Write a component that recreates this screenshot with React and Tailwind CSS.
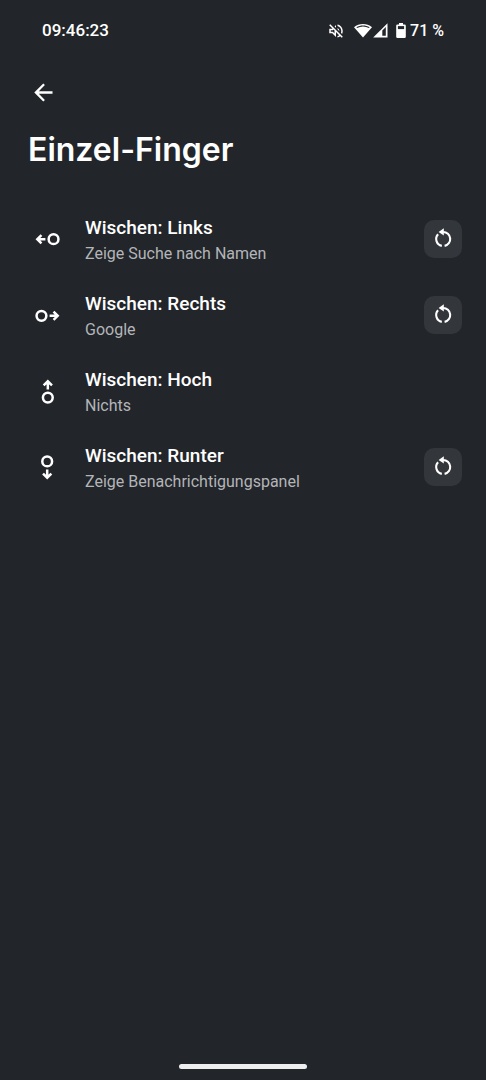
import React from 'react';

function Svg({ className, children, viewBox = '0 0 24 24' }) {
  return (
    <svg viewBox={viewBox} className={className} fill="currentColor" aria-hidden="true">
      {children}
    </svg>
  );
}

const rotations = {
  left: 'rotate(0 12 12)',
  right: 'rotate(180 12 12)',
  up: 'rotate(90 12 12)',
  down: 'rotate(270 12 12)',
};

function SwipeIcon({ direction }) {
  return (
    <Svg className="size-[25px] shrink-0">
      <g transform={rotations[direction]} fill="none" stroke="currentColor" strokeWidth="2.4">
        <circle cx="17.8" cy="11.7" r="4.7" />
        <path d="M10 11.7H3M6.2 7.7 2.2 11.7l4 4" />
      </g>
    </Svg>
  );
}

function StatusBar() {
  return (
    <div className="flex h-[62px] items-center justify-between px-[42px] text-[17px] font-medium">
      <time>09:46:23</time>
      <div className="flex items-center">
        <Svg className="mr-[9px] size-[18px]" viewBox="0 0 24 24">
          <path d="M4.34 2.93 2.93 4.34 7.29 8.7 7 9H3v6h4l5 5v-6.59l4.18 4.18c-.65.49-1.38.88-2.18 1.11v2.06a8.94 8.94 0 0 0 3.61-1.75l2.05 2.05 1.41-1.41L4.34 2.93zM10 15.17 7.83 13H5v-2h2.83l.88-.88L10 11.41v3.76zM19 12c0 .82-.15 1.61-.41 2.34l1.53 1.53c.56-1.17.88-2.48.88-3.87 0-4.28-2.99-7.86-7-8.77v2.06c2.89.86 5 3.54 5 6.71zm-7-8-1.88 1.88L12 7.76zm4.5 8A4.5 4.5 0 0 0 14 7.97v1.79l2.48 2.48c.01-.08.02-.16.02-.24z" />
        </Svg>
        <Svg className="h-4 w-[18px]" viewBox="0 0 18 16">
          <path d="M0 4.2C5 0 13 0 18 4.2L9 14.6z" />
          <path d="M2.4 4.3C6.4 1.9 11.6 1.9 15.6 4.3L15 5.1C11 3 7 3 3 5.1z" className="fill-[#22252a]" />
        </Svg>
        <Svg className="mr-2 size-4" viewBox="0 0 16 16">
          <path d="M15.5.2V14.4H1.2z" />
          <path d="M10.3 7.4 13.8 3.9V12.7H10.3z" className="fill-[#22252a]" />
        </Svg>
        <Svg className="mr-1 h-4 w-[10px]" viewBox="0 0 10 16">
          <path d="M3 0h4v1.5h1.5A1.3 1.3 0 0 1 9.8 2.8v11a1.3 1.3 0 0 1-1.3 1.3h-7A1.3 1.3 0 0 1 .2 13.8v-11a1.3 1.3 0 0 1 1.3-1.3H3z" />
          <path d="M1.9 3.1h6.2v3H1.9z" className="fill-[#22252a]" />
        </Svg>
        <span className="text-base">71&nbsp;%</span>
      </div>
    </div>
  );
}

const gestures = [
  { direction: 'left', title: 'Wischen: Links', action: 'Zeige Suche nach Namen', resettable: true },
  { direction: 'right', title: 'Wischen: Rechts', action: 'Google', resettable: true },
  { direction: 'up', title: 'Wischen: Hoch', action: 'Nichts', resettable: false },
  { direction: 'down', title: 'Wischen: Runter', action: 'Zeige Benachrichtigungspanel', resettable: true },
];

function GestureRow({ direction, title, action, resettable }) {
  return (
    <li className="flex h-[76px] items-center pr-6 pl-[35px]">
      <button type="button" className="flex min-w-0 flex-1 items-center gap-[25px] text-left">
        <SwipeIcon direction={direction} />
        <span className="flex min-w-0 flex-col pt-1">
          <span className="text-[19px] leading-[26px] font-medium">{title}</span>
          <span className="text-base leading-[26px] text-[#b3b5b8]">{action}</span>
        </span>
      </button>
      {resettable && (
        <button
          type="button"
          aria-label={`${title} zurücksetzen`}
          className="flex size-[38px] shrink-0 items-center justify-center rounded-[10px] bg-[#33363b]"
        >
          <Svg className="size-6">
            <path d="M12.8 1.2 7.6 4.9l5.2 3.7z" />
            <path
              d="M12.2 5a7 7 0 0 1 1.4 13.86M7.1 7.2A7 7 0 0 0 10.8 18.86"
              fill="none"
              stroke="currentColor"
              strokeWidth="2.1"
            />
          </Svg>
        </button>
      )}
    </li>
  );
}

export default function App() {
  return (
    <div className="flex min-h-screen flex-col bg-[#22252a] font-['Roboto','Noto_Sans',sans-serif] text-white">
      <StatusBar />
      <header className="flex flex-col items-start px-7">
        <button type="button" aria-label="Zurück" className="mt-3.5 flex h-8 w-[30px] items-center justify-center">
          <Svg className="size-[27px]">
            <path d="M20 10.8H7.83l5.4-5.4L11.8 4l-8 8 8 8 1.45-1.41L7.83 13.2H20z" />
          </Svg>
        </button>
        <h1 className="mt-5 font-['Inter',sans-serif] text-[32px] leading-11 font-semibold">Einzel-Finger</h1>
      </header>
      <main className="flex-1 pt-[29px]">
        <ul>
          {gestures.map((gesture) => (
            <GestureRow key={gesture.direction} {...gesture} />
          ))}
        </ul>
      </main>
      <div className="flex justify-center pb-[11px]">
        <div className="h-[5px] w-32 rounded-full bg-[#eeeeee]" />
      </div>
    </div>
  );
}
